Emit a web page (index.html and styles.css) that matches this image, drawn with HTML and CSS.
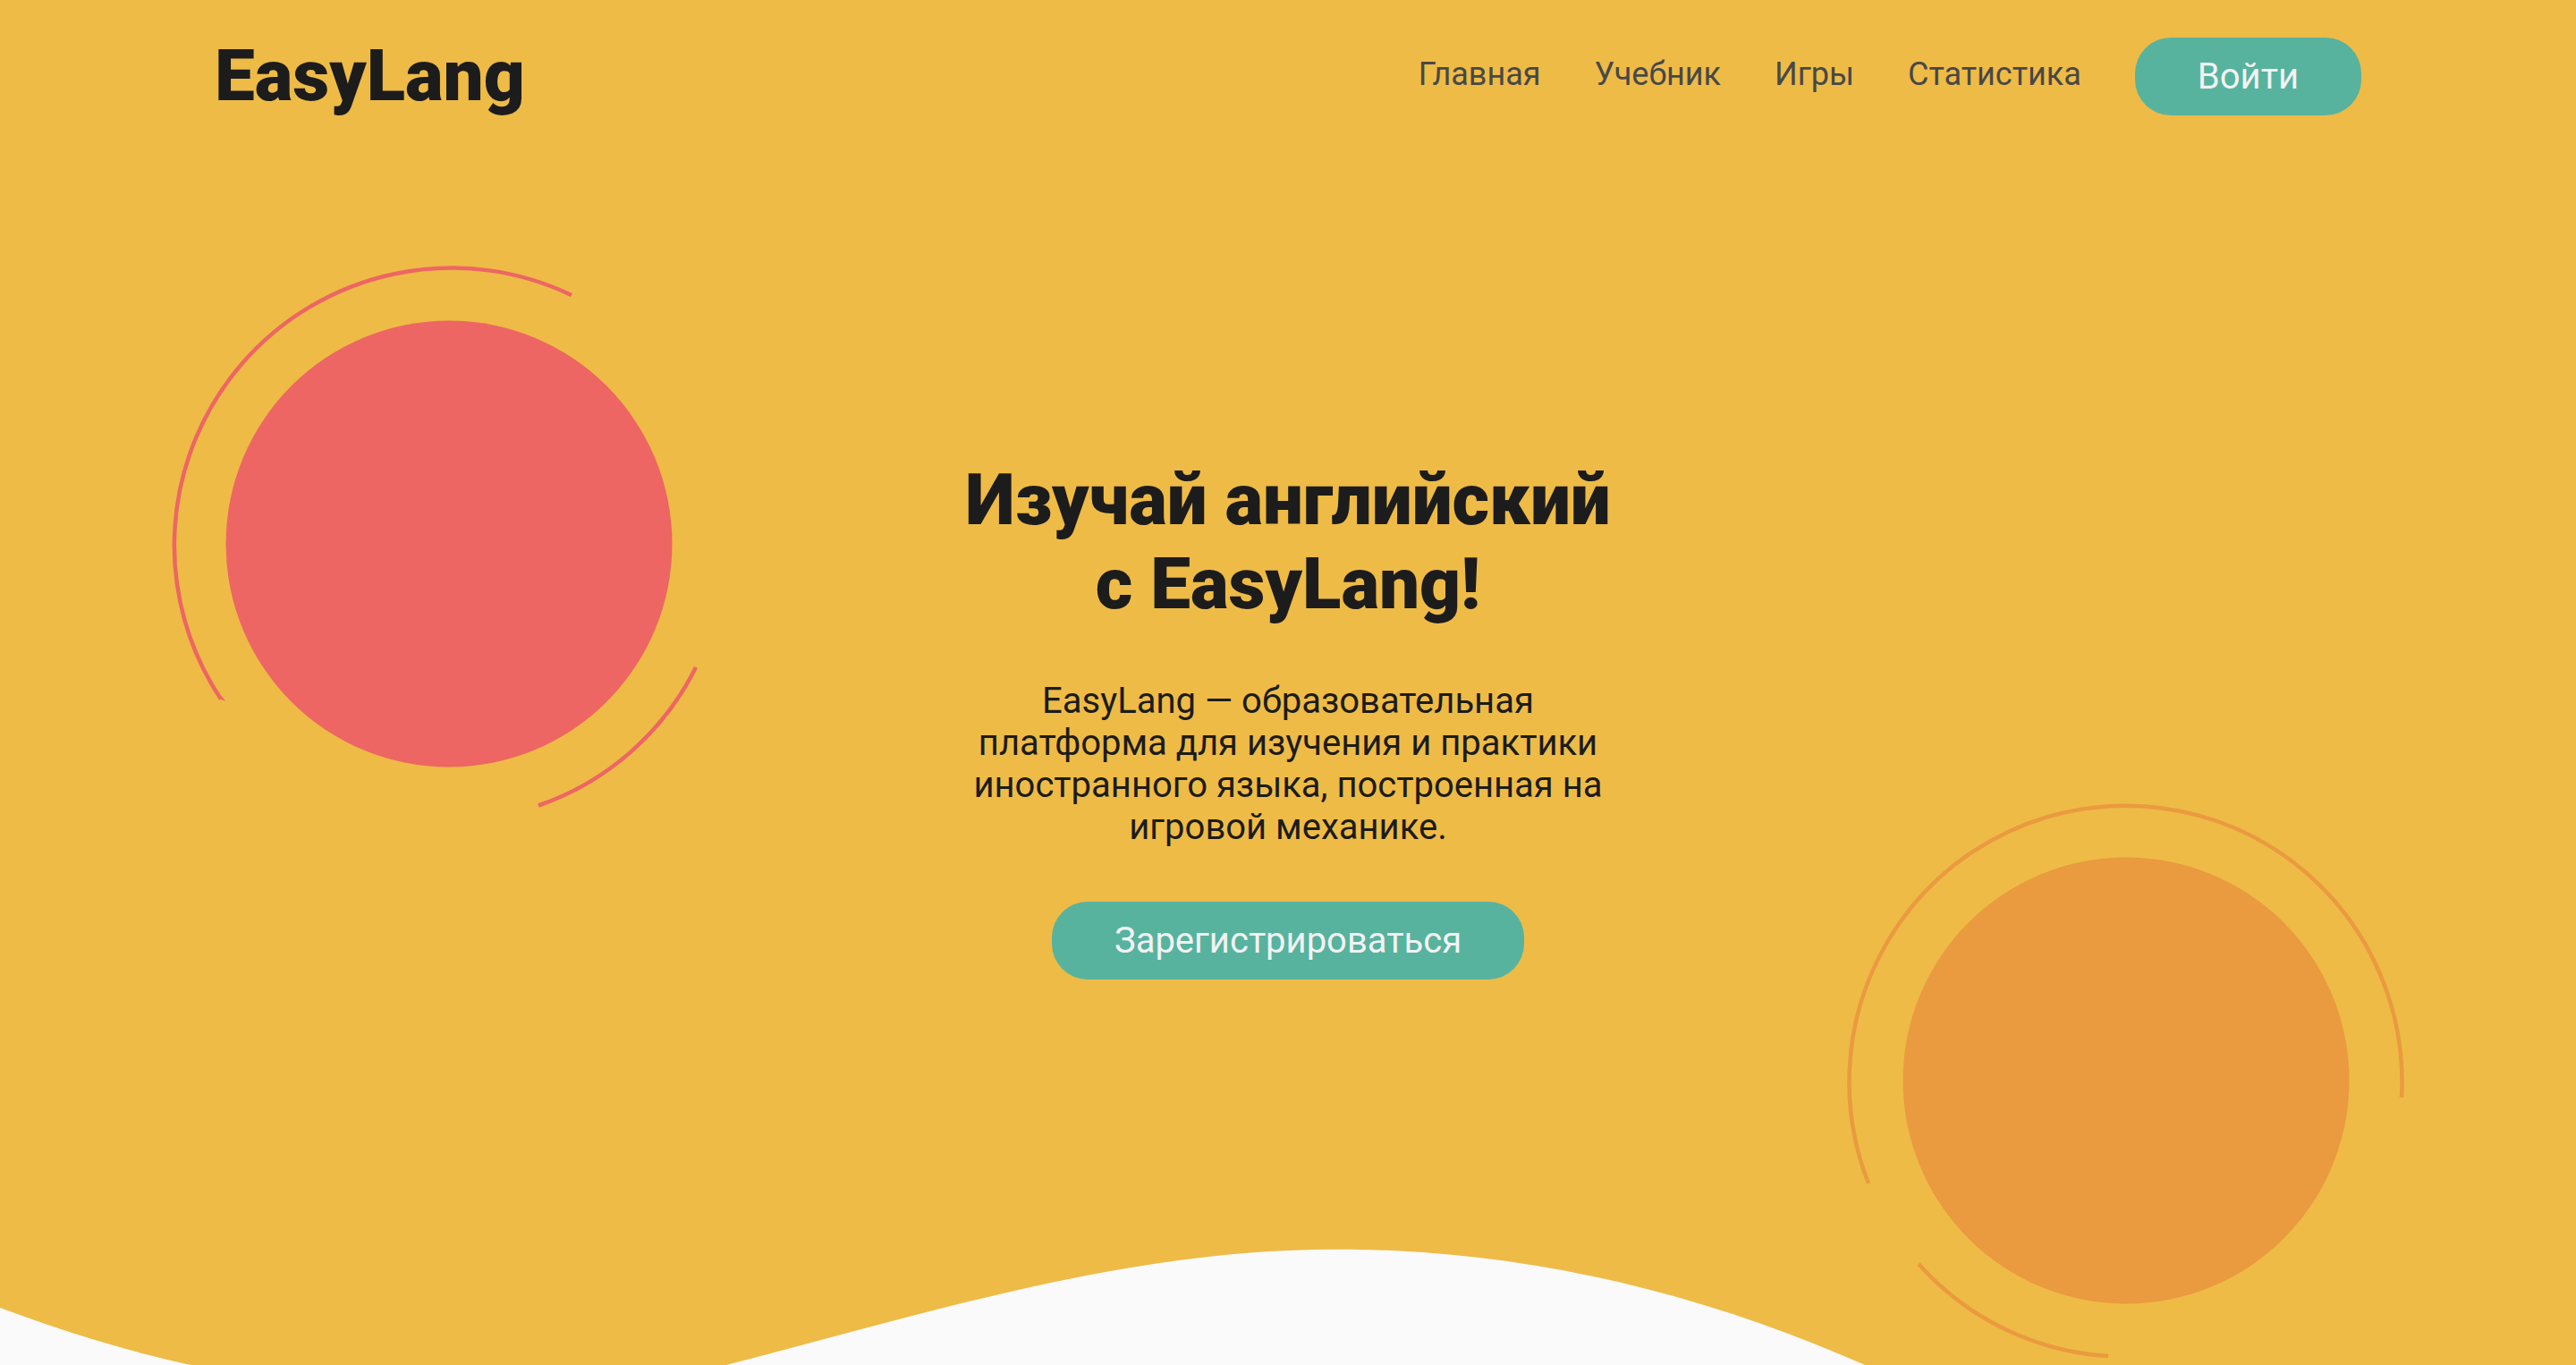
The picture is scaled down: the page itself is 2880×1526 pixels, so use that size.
FILE: index.html
```html
<!DOCTYPE html>
<html lang="ru">
<head>
  <meta charset="UTF-8">
  <meta name="viewport" content="width=device-width, initial-scale=1">
  <title>EasyLang</title>
  <link rel="stylesheet" href="styles.css">
</head>
<body>
  <div class="page">
    <svg class="wave" viewBox="0 0 2880 240" aria-hidden="true">
      <path d="M0 176 C70 202 140 224 213 240 L300 262 L720 263 C960 206 1200 122 1440 112 C1680 102 1920 156 2160 275 L2880 275 L2880 400 L0 400 Z"/>
    </svg>
    <div class="container">
      <svg class="shape shape-red" viewBox="0 0 620 620" aria-hidden="true">
        <circle cx="310" cy="310" r="249.5"/>
        <path d="M447 32 A310 310 0 0 0 55 483.500"/>
        <path class="tip" d="M53 483 L57 481.500 L60 486 Z"/>
        <path d="M586 448 A309 309 0 0 1 410 602.500"/>
      </svg>
      <svg class="shape shape-orange" viewBox="0 0 620 620" aria-hidden="true">
        <circle cx="310" cy="310" r="249.5"/>
        <path d="M618 329 A309 309 0 1 0 22 425"/>
        <path d="M78 515 A309 309 0 0 0 290 618"/>
      </svg>
      <header class="header">
        <a class="logo" href="#">EasyLang</a>
        <nav class="nav">
          <ul class="menu">
            <li><a href="#">Главная</a></li>
            <li><a href="#">Учебник</a></li>
            <li><a href="#">Игры</a></li>
            <li><a href="#">Статистика</a></li>
          </ul>
          <button class="button" type="button">Войти</button>
        </nav>
      </header>
      <main class="promo">
        <h1 class="title">Изучай английский с&nbsp;EasyLang!</h1>
        <p class="text">EasyLang — образовательная платформа для изучения и практики иностранного языка, построенная на игровой механике.</p>
        <button class="button" type="button">Зарегистрироваться</button>
      </main>
    </div>
  </div>
</body>
</html>
```
FILE: styles.css
```css
* {
  box-sizing: border-box;
}

body {
  margin: 0;
  font-family: Roboto, "Liberation Sans", sans-serif;
  color: #1c1c1c;
  background: #fafafa;
}

.page {
  position: relative;
  min-height: 100vh;
  overflow: hidden;
  background: #eebb47;
}

.container {
  position: relative;
  max-width: 2400px;
  margin: 0 auto;
}

.wave {
  position: absolute;
  left: 0;
  bottom: 0;
  width: 100%;
  fill: #fafafa;
}

.shape {
  position: absolute;
  width: 620px;
  height: 620px;
  overflow: visible;
}

.shape path {
  fill: none;
  stroke: currentColor;
  stroke-width: 4.5;
}

.shape circle,
.shape .tip {
  fill: currentColor;
  stroke: none;
}

.shape-red {
  top: 298px;
  left: -48px;
  color: #ed6663;
}

.shape-orange {
  top: 898px;
  right: -47px;
  color: #ea9a3f;
}

.header {
  position: relative;
  display: flex;
  align-items: center;
  justify-content: space-between;
  padding: 38px 0;
}

.logo {
  font-size: 80px;
  line-height: 94px;
  font-weight: 900;
  color: inherit;
  text-decoration: none;
}

.nav,
.menu {
  display: flex;
  align-items: center;
  gap: 60px;
}

.menu {
  margin: 0;
  padding: 0 0 4px;
  list-style: none;
}

.menu a {
  font-size: 36px;
  line-height: 42px;
  color: #484848;
  text-decoration: none;
}

.button {
  padding: 20px 70px;
  border: 0;
  border-radius: 40px;
  font: inherit;
  font-size: 40px;
  line-height: 47px;
  color: #f2f2f2;
  background: #57b39e;
  cursor: pointer;
}

.promo {
  position: relative;
  display: flex;
  flex-direction: column;
  align-items: center;
  gap: 60px;
  max-width: 740px;
  margin: 0 auto;
  padding: 342px 0 240px;
  text-align: center;
}

.title {
  margin: 0;
  font-size: 80px;
  line-height: 94px;
  font-weight: 900;
}

.text {
  margin: 0;
  font-size: 40px;
  line-height: 47px;
}
```
